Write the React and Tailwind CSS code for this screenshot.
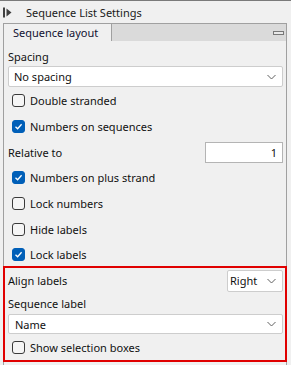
import { useState } from "react";

const Check = ({ checked, label, onToggle }) => (
  <div className="flex items-center h-full pl-[8px] cursor-default" onClick={onToggle}>
    <div
      className={
        checked
          ? "w-[13px] h-[13px] rounded-[3px] bg-[#005fb8] border border-[#005fb8] flex items-center justify-center"
          : "w-[13px] h-[13px] rounded-[3px] bg-[#f5f5f5] border border-[#3a3a3a]"
      }
    >
      {checked && (
        <svg width="9" height="9" viewBox="0 0 9 9">
          <polyline points="1.5,4.8 3.6,6.8 7.6,2.2" fill="none" stroke="white" strokeWidth="1.3" />
        </svg>
      )}
    </div>
    <span className="ml-[5px]">{label}</span>
  </div>
);

const Chevron = () => (
  <svg width="9" height="6" viewBox="0 0 9 6" className="shrink-0">
    <polyline points="0.5,1 4.5,5 8.5,1" fill="none" stroke="#606060" strokeWidth="1" />
  </svg>
);

const Select = ({ value, className }) => (
  <div
    className={
      "flex items-center justify-between bg-white border border-[#cdcdcd] rounded-[2px] pr-[6px] " +
      className
    }
  >
    <span>{value}</span>
    <Chevron />
  </div>
);

const App = () => {
  const [opts, setOpts] = useState({
    doubleStranded: false,
    numbersOnSeq: true,
    plusStrand: true,
    lockNumbers: false,
    hideLabels: false,
    lockLabels: true,
    selectionBoxes: false,
  });

  const toggle = (k) => setOpts({ ...opts, [k]: !opts[k] });

  return (
    <div className="w-[291px] h-[365px] bg-[#f0f0f0] overflow-hidden text-[11px] text-[#111] font-['Noto_Sans',sans-serif] leading-none border-t border-[#7a7a7a]">
      <div className="h-[22px] flex items-center">
        <svg width="12" height="11" viewBox="0 0 12 11" className="ml-[3px]">
          <rect x="0" y="0.5" width="2" height="10" fill="#404040" />
          <polygon points="3.5,1.5 8.5,5.5 3.5,9.5" fill="#404040" />
        </svg>
        <span className="ml-[11px] text-[#1a1a1a]">Sequence List Settings</span>
      </div>

      <div className="ml-[3px] w-[284px] h-[342px] border-l border-r border-t border-[#a0a0a0] flex flex-col">
        <div className="h-[17px] bg-[#dadada] flex">
          <div className="w-[108px] bg-[#f0f0f0] border-r border-[#a0a0a0] flex items-center pl-[9px] text-[#101030]">
            Sequence layout
          </div>
          <div className="flex-1 flex justify-end items-center pr-[2px]">
            <div className="w-[11px] h-[4px] border border-[#777] bg-[#e8e8e8]"></div>
          </div>
        </div>

        <div className="flex flex-col pt-[7px]">
          <div className="h-[16px] flex items-center pl-[4px]">Spacing</div>
          <Select value="No spacing" className="mt-[2px] ml-[4px] mr-[3px] h-[21px] pl-[5px]" />
          <div className="h-[26px]">
            <Check checked={opts.doubleStranded} label="Double stranded" onToggle={() => toggle("doubleStranded")} />
          </div>
          <div className="h-[27px]">
            <Check checked={opts.numbersOnSeq} label="Numbers on sequences" onToggle={() => toggle("numbersOnSeq")} />
          </div>
          <div className="h-[24px] flex items-center justify-between pl-[4px] pr-[3px]">
            <span>Relative to</span>
            <div className="w-[78px] h-[21px] bg-white border border-[#b4b4b4] flex items-center justify-end pr-[5px]">
              1
            </div>
          </div>
          <div className="h-[26px]">
            <Check checked={opts.plusStrand} label="Numbers on plus strand" onToggle={() => toggle("plusStrand")} />
          </div>
          <div className="h-[26px]">
            <Check checked={opts.lockNumbers} label="Lock numbers" onToggle={() => toggle("lockNumbers")} />
          </div>
          <div className="h-[26px]">
            <Check checked={opts.hideLabels} label="Hide labels" onToggle={() => toggle("hideLabels")} />
          </div>
          <div className="h-[24px]">
            <Check checked={opts.lockLabels} label="Lock labels" onToggle={() => toggle("lockLabels")} />
          </div>

          <div className="-mx-[1px] border-2 border-[#e00000] h-[96px] flex flex-col">
            <div className="h-[24px] flex items-center justify-between pl-[3px] pr-[2px] pt-[1px]">
              <span>Align labels</span>
              <Select value="Right" className="w-[56px] h-[22px] pl-[2px]" />
            </div>
            <div className="h-[22px] flex items-center pl-[3px]">Sequence label</div>
            <Select value="Name" className="ml-[3px] mr-[2px] h-[20px] pl-[6px]" />
            <div className="flex-1 -ml-[1px]">
              <Check checked={opts.selectionBoxes} label="Show selection boxes" onToggle={() => toggle("selectionBoxes")} />
            </div>
          </div>
        </div>
      </div>
    </div>
  );
};

export default App;
